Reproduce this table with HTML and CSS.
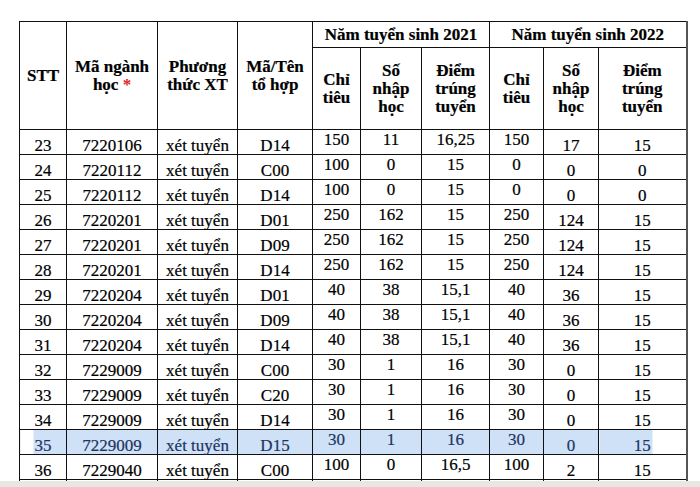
FILE: index.html
```html
<!DOCTYPE html>
<html lang="vi">
<head>
<meta charset="utf-8">
<title>Bảng điểm trúng tuyển</title>
<link rel="stylesheet" href="styles.css">
</head>
<body>
<div class="page">
<table class="grid">
<colgroup>
<col class="c1"><col class="c2"><col class="c3"><col class="c4"><col class="c5"><col class="c6"><col class="c7"><col class="c8"><col class="c9"><col class="c10">
</colgroup>
<thead>
<tr class="h1">
<th rowspan="2">STT</th>
<th rowspan="2">Mã ngành<br>học <span class="req">*</span></th>
<th rowspan="2">Phương<br>thức XT</th>
<th rowspan="2">Mã/Tên<br>tổ hợp</th>
<th colspan="3">Năm tuyển sinh 2021</th>
<th colspan="3">Năm tuyển sinh 2022</th>
</tr>
<tr class="h2">
<th>Chỉ<br>tiêu</th>
<th>Số<br>nhập<br>học</th>
<th>Điểm<br>trúng<br>tuyển</th>
<th>Chỉ<br>tiêu</th>
<th>Số<br>nhập<br>học</th>
<th>Điểm<br>trúng<br>tuyển</th>
</tr>
</thead>
<tbody>
<tr><td>23</td><td>7220106</td><td>xét tuyển</td><td>D14</td><td class="t">150</td><td class="t">11</td><td class="t">16,25</td><td class="t">150</td><td>17</td><td>15</td></tr>
<tr><td>24</td><td>7220112</td><td>xét tuyển</td><td>C00</td><td class="t">100</td><td class="t">0</td><td class="t">15</td><td class="t">0</td><td>0</td><td>0</td></tr>
<tr><td>25</td><td>7220112</td><td>xét tuyển</td><td>D14</td><td class="t">100</td><td class="t">0</td><td class="t">15</td><td class="t">0</td><td>0</td><td>0</td></tr>
<tr><td>26</td><td>7220201</td><td>xét tuyển</td><td>D01</td><td class="t">250</td><td class="t">162</td><td class="t">15</td><td class="t">250</td><td>124</td><td>15</td></tr>
<tr><td>27</td><td>7220201</td><td>xét tuyển</td><td>D09</td><td class="t">250</td><td class="t">162</td><td class="t">15</td><td class="t">250</td><td>124</td><td>15</td></tr>
<tr><td>28</td><td>7220201</td><td>xét tuyển</td><td>D14</td><td class="t">250</td><td class="t">162</td><td class="t">15</td><td class="t">250</td><td>124</td><td>15</td></tr>
<tr><td>29</td><td>7220204</td><td>xét tuyển</td><td>D01</td><td class="t">40</td><td class="t">38</td><td class="t">15,1</td><td class="t">40</td><td>36</td><td>15</td></tr>
<tr><td>30</td><td>7220204</td><td>xét tuyển</td><td>D09</td><td class="t">40</td><td class="t">38</td><td class="t">15,1</td><td class="t">40</td><td>36</td><td>15</td></tr>
<tr><td>31</td><td>7220204</td><td>xét tuyển</td><td>D14</td><td class="t">40</td><td class="t">38</td><td class="t">15,1</td><td class="t">40</td><td>36</td><td>15</td></tr>
<tr><td>32</td><td>7229009</td><td>xét tuyển</td><td>C00</td><td class="t">30</td><td class="t">1</td><td class="t">16</td><td class="t">30</td><td>0</td><td>15</td></tr>
<tr><td>33</td><td>7229009</td><td>xét tuyển</td><td>C20</td><td class="t">30</td><td class="t">1</td><td class="t">16</td><td class="t">30</td><td>0</td><td>15</td></tr>
<tr><td>34</td><td>7229009</td><td>xét tuyển</td><td>D14</td><td class="t">30</td><td class="t">1</td><td class="t">16</td><td class="t">30</td><td>0</td><td>15</td></tr>
<tr class="sel"><td>35</td><td>7229009</td><td>xét tuyển</td><td>D15</td><td class="t">30</td><td class="t">1</td><td class="t">16</td><td class="t">30</td><td>0</td><td>15</td></tr>
<tr><td>36</td><td>7229040</td><td>xét tuyển</td><td>C00</td><td class="t">100</td><td class="t">0</td><td class="t">16,5</td><td class="t">100</td><td>2</td><td>15</td></tr>
<tr class="stub"><td></td><td></td><td></td><td></td><td></td><td></td><td></td><td></td><td></td><td></td></tr>
</tbody>
</table>
</div>
<div class="strip"></div>
</body>
</html>
```
FILE: styles.css
```css
html, body {
  margin: 0;
  padding: 0;
}
body {
  background: #ffffff;
  width: 700px;
  height: 487px;
  overflow: hidden;
  font-family: "Liberation Serif", "Times New Roman", serif;
  color: #000;
}
.page {
  padding: 21px 0 0 19px;
}
.grid {
  border-collapse: collapse;
  table-layout: fixed;
  width: 667px;
}
.c1 { width: 47px; }
.c2 { width: 91px; }
.c3 { width: 80px; }
.c4 { width: 75px; }
.c5 { width: 48px; }
.c6 { width: 61px; }
.c7 { width: 68px; }
.c8 { width: 54px; }
.c9 { width: 55px; }
.c10 { width: 88px; }

.grid th,
.grid td {
  border: 1px solid #111;
  padding: 0;
  text-align: center;
  font-size: 17px;
  -webkit-text-stroke: 0.2px #000;
}
.grid th:last-child,
.grid td:last-child {
  border-right: 2px solid #555;
}
.grid th {
  font-weight: bold;
  line-height: 18px;
  vertical-align: middle;
}
.h1 th { height: 25px; }
.h2 th { height: 81px; }
.req {
  color: #e02424;
  -webkit-text-stroke: 0;
}
.grid td {
  height: 24px;
  line-height: 17px;
  vertical-align: bottom;
  white-space: nowrap;
}
.grid td.t {
  vertical-align: top;
  line-height: 20px;
}
.sel td {
  background: #cfe1f7;
  color: #1d3461;
  -webkit-text-stroke: 0.2px #1d3461;
}
.sel td:first-child {
  background: linear-gradient(to right, #ffffff 13px, #cfe1f7 13px);
}
.sel td:last-child {
  background: linear-gradient(to right, #cfe1f7 53px, #ffffff 53px);
}
.stub td {
  height: 1px;
  border-bottom: none;
  line-height: 0;
  font-size: 0;
}
.strip {
  height: 12px;
  background: #e9e7e3;
}
```
